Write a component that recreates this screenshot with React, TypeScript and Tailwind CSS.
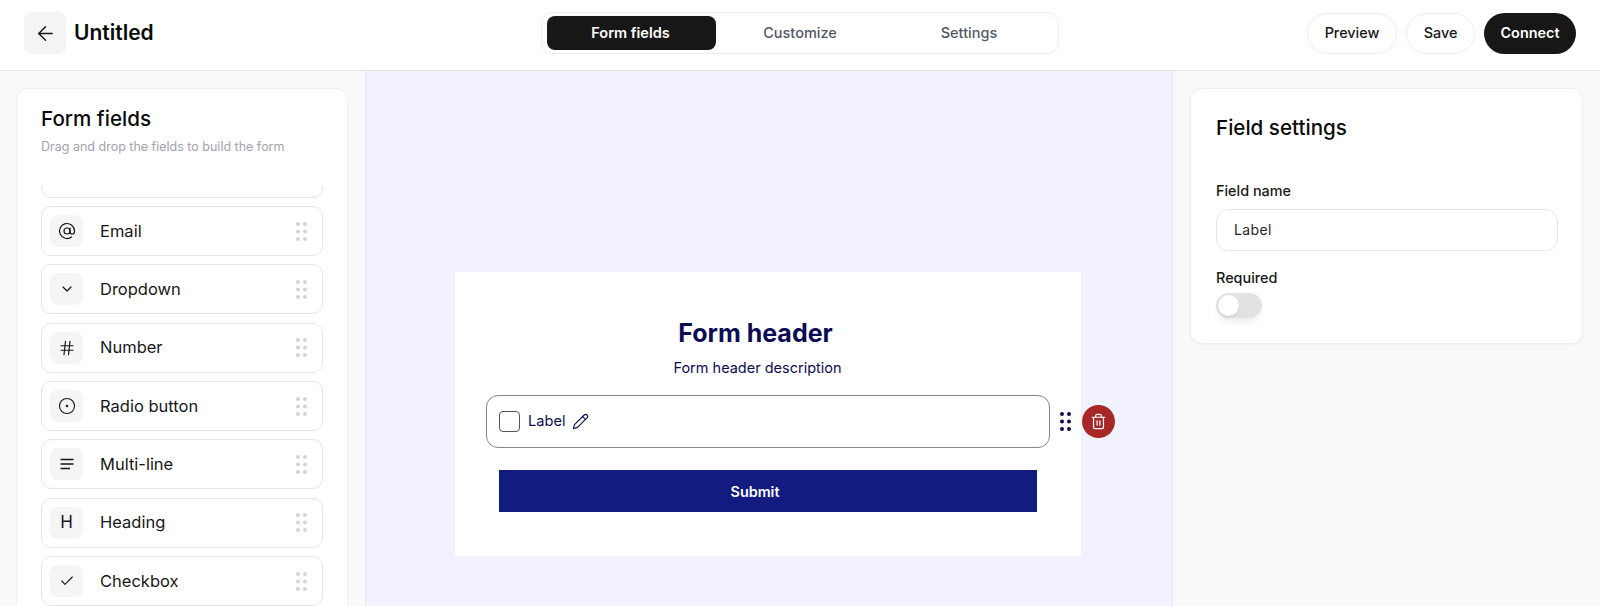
import { ArrowLeft, AtSign, Check, ChevronDown, CircleDot, Hash, Pencil, Trash2 } from "lucide-react";
import type { ReactNode } from "react";

function Dots({ className }: { className?: string }) {
  return (
    <svg width="11" height="19" viewBox="0 0 11 19" className={className} fill="currentColor">
      {[2, 9.5, 17].map((cy) => (
        <g key={cy}>
          <circle cx="2" cy={cy} r="2" />
          <circle cx="9" cy={cy} r="2" />
        </g>
      ))}
    </svg>
  );
}

function LinesIcon() {
  return (
    <svg width="14" height="12" viewBox="0 0 14 12" fill="none" stroke="currentColor" strokeWidth="1.4">
      <path d="M0.5 1.5h13M0.5 6h13M0.5 10.5h9.5" />
    </svg>
  );
}

const fields: { name: string; icon: ReactNode }[] = [
  { name: "Email", icon: <AtSign size={18} strokeWidth={1.6} /> },
  { name: "Dropdown", icon: <ChevronDown size={16} strokeWidth={1.8} /> },
  { name: "Number", icon: <Hash size={18} strokeWidth={1.6} /> },
  { name: "Radio button", icon: <CircleDot size={18} strokeWidth={1.5} /> },
  { name: "Multi-line", icon: <LinesIcon /> },
  { name: "Heading", icon: <span className="text-[17px] leading-none">H</span> },
  { name: "Checkbox", icon: <Check size={16} strokeWidth={1.6} /> },
];

function FieldItem({ name, icon }: { name: string; icon: ReactNode }) {
  return (
    <div className="flex h-[50px] shrink-0 items-center rounded-[10px] border border-[#e5e5e7] bg-white pl-2 pr-[15px]">
      <div className="flex h-8 w-[33px] items-center justify-center rounded-lg bg-[#f5f5f5] text-[#171717]">{icon}</div>
      <span className="ml-[17px] flex-1 text-[16.5px] text-[#171717]">{name}</span>
      <Dots className="text-[#d4d4d4]" />
    </div>
  );
}

export default function App() {
  return (
    <div className="flex h-[606px] w-[1600px] flex-col overflow-hidden bg-white font-['Inter',sans-serif] text-[#171717]">
      <header className="flex h-[71px] shrink-0 items-center border-b border-[#e6e6e8] pb-[4px] pl-6 pr-6">
        <div className="flex w-[517px] items-center">
          <button className="flex h-[42px] w-[42px] items-center justify-center rounded-lg bg-[#f4f4f4]">
            <ArrowLeft size={23} strokeWidth={1.5} />
          </button>
          <h1 className="ml-2 text-[21px] font-semibold text-[#0a0a0a]">Untitled</h1>
        </div>
        <div className="flex h-[42px] w-[518px] items-center rounded-xl border border-[#ececee] bg-white px-[5px]">
          <div className="flex h-[34px] w-[169px] items-center justify-center rounded-lg bg-[#171717] pr-[2px] text-[14.5px] font-semibold text-white">Form fields</div>
          <div className="flex h-[34px] w-[168px] items-center justify-center text-[14.5px] font-medium text-[#525866]">Customize</div>
          <div className="flex h-[34px] w-[168px] items-center justify-center pl-[2px] text-[14.5px] font-medium text-[#525866]">Settings</div>
        </div>
        <div className="ml-auto flex items-center gap-[9px]">
          <button className="h-[41px] w-[90px] rounded-full border border-[#ececee] text-[14.4px] font-medium">Preview</button>
          <button className="h-[41px] w-[69px] rounded-full border border-[#ececee] text-[14.4px] font-medium">Save</button>
          <button className="h-[41px] w-[92px] rounded-full bg-[#171717] text-[14.4px] font-semibold text-white">Connect</button>
        </div>
      </header>

      <div className="flex min-h-0 flex-1">
        <aside className="w-[366px] shrink-0 border-r border-[#e9eaf5] bg-[#f9f9f9] pl-4 pr-[17px] pt-[17px]">
          <div className="h-[600px] rounded-xl border border-[#f0f0f0] bg-white px-6 pt-4">
            <h2 className="text-[20.6px] font-medium leading-[28px] text-[#0a0a0a]">Form fields</h2>
            <p className="mt-[6px] text-[12.5px] leading-[16px] text-[#a3a3ab]">Drag and drop the fields to build the form</p>
            <div className="mt-[31px] h-[450px] overflow-hidden">
              <div className="-mt-[38.3px] flex flex-col gap-[8.33px]">
                <div className="h-[50px] shrink-0 rounded-[10px] border border-[#e5e5e7]" />
                {fields.map((f) => (
                  <FieldItem key={f.name} name={f.name} icon={f.icon} />
                ))}
              </div>
            </div>
          </div>
        </aside>

        <main className="flex min-w-0 flex-1 justify-center bg-[#f1f2fd] pr-[2px] pt-[201px]">
          <div className="h-[284px] w-[626px] bg-white pl-[31px] pt-[43px]">
            <div className="w-[539px] text-center">
              <h2 className="text-[25px] font-bold leading-[36px] text-[#0c0c54]">Form header</h2>
              <p className="mt-[7px] pl-1 text-[14.5px] leading-[20px] text-[#0c0c54]">Form header description</p>
            </div>
            <div className="mt-[17px] flex items-center">
              <div className="flex h-[53px] w-[564px] shrink-0 items-center rounded-xl border border-[#85858f] pl-3">
                <span className="h-[21px] w-[21px] rounded border border-[#55555c]" />
                <span className="ml-2 text-[14.6px] text-[#0c0c54]">Label</span>
                <Pencil size={17} strokeWidth={1.6} className="ml-[7px] text-[#0c0c54]" />
              </div>
              <Dots className="ml-[10px] shrink-0 text-[#0c0c54]" />
              <button className="ml-[11px] flex h-[33px] w-[33px] shrink-0 items-center justify-center rounded-full bg-[#a82828] text-white">
                <Trash2 size={17} strokeWidth={1.7} />
              </button>
            </div>
            <button className="ml-[13px] mt-[22px] h-[42px] w-[538px] bg-[#111b80] pr-[26px] pt-px text-[14.4px] font-semibold text-white">Submit</button>
          </div>
        </main>

        <aside className="w-[428px] shrink-0 border-l border-[#e6e7f3] bg-[#f9f9f9] pl-[17px] pr-[17px] pt-[17px]">
          <div className="h-[256px] rounded-xl border border-[#eeeeee] bg-white pl-[25px] pr-6 pt-[25px] shadow-[0_1px_2px_rgba(0,0,0,0.04)]">
            <h2 className="text-[20.6px] font-medium leading-[28px] text-[#0a0a0a]">Field settings</h2>
            <label className="mt-[39px] block text-[14.4px] font-medium leading-[20px]">Field name</label>
            <div className="mt-2 flex h-[42px] items-center rounded-xl border border-[#e5e5e7] pl-[17px] text-sm tracking-wide text-[#262626]">Label</div>
            <label className="mt-[17px] block text-[14.4px] font-medium leading-[20px]">Required</label>
            <div className="mt-[5px] flex h-[25px] w-[46px] items-center rounded-full bg-[#e2e2e4] pl-[2px] shadow-[0_6px_10px_-4px_rgba(0,0,0,0.12)]">
              <span className="h-[21px] w-[21px] rounded-full bg-white shadow" />
            </div>
          </div>
        </aside>
      </div>
    </div>
  );
}
